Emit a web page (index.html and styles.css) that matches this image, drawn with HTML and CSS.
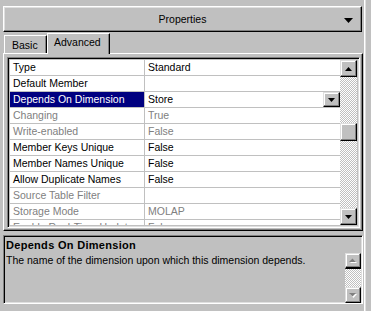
FILE: index.html
```html
<!DOCTYPE html>
<html>
<head>
<meta charset="utf-8">
<link rel="stylesheet" href="styles.css">
</head>
<body>
<div class="frame">
  <div class="main">
    <div class="props-btn">
      <span class="props-title">Properties</span>
      <svg class="props-arrow" width="9" height="5" viewBox="0 0 9 5"><path d="M0 0H9L4.5 5Z" fill="#000"/></svg>
    </div>
    <div class="tabs">
      <div class="tab">Basic</div>
      <div class="tab active">Advanced</div>
    </div>
    <div class="panel">
      <div class="grid">
        <div class="rows">
          <div class="row"><div class="name">Type</div><div class="val">Standard</div></div>
          <div class="row"><div class="name">Default Member</div><div class="val"></div></div>
          <div class="row"><div class="name sel">Depends On Dimension</div><div class="val combo"><span>Store</span><div class="combo-btn"><svg width="7" height="4" viewBox="0 0 7 4"><path d="M0 0H7L3.5 4Z" fill="#000"/></svg></div></div></div>
          <div class="row dis"><div class="name">Changing</div><div class="val">True</div></div>
          <div class="row dis"><div class="name">Write-enabled</div><div class="val">False</div></div>
          <div class="row"><div class="name">Member Keys Unique</div><div class="val">False</div></div>
          <div class="row"><div class="name">Member Names Unique</div><div class="val">False</div></div>
          <div class="row"><div class="name">Allow Duplicate Names</div><div class="val">False</div></div>
          <div class="row dis"><div class="name">Source Table Filter</div><div class="val"></div></div>
          <div class="row dis"><div class="name">Storage Mode</div><div class="val">MOLAP</div></div>
          <div class="row dis"><div class="name">Enable Real-Time Updates</div><div class="val">False</div></div>
        </div>
        <div class="vscroll">
          <div class="sbtn"><svg width="7" height="4" viewBox="0 0 7 4"><path d="M0 4H7L3.5 0Z" fill="#000"/></svg></div>
          <div class="track">
            <div class="track-a"></div>
            <div class="thumb"></div>
            <div class="track-b"></div>
          </div>
          <div class="sbtn"><svg width="7" height="4" viewBox="0 0 7 4"><path d="M0 0H7L3.5 4Z" fill="#000"/></svg></div>
        </div>
      </div>
    </div>
    <div class="desc">
      <div class="desc-title">Depends On Dimension</div>
      <div class="desc-body">
        <div class="desc-text">The name of the dimension upon which this dimension depends.</div>
        <div class="dscroll">
          <div class="sbtn dbtn up"><svg width="9" height="5" viewBox="0 0 9 5"><path d="M1 5H8L4.5 1.5Z" fill="#fff"/><path d="M0 4H7L3.5 0.5Z" fill="#808080"/></svg></div>
          <div class="dtrack"></div>
          <div class="sbtn dbtn"><svg width="9" height="5" viewBox="0 0 9 5"><path d="M1 1H8L4.5 5Z" fill="#fff"/><path d="M0 0H7L3.5 3.5Z" fill="#808080"/></svg></div>
        </div>
      </div>
    </div>
  </div>
  <div class="edge"></div>
</div>
</body>
</html>
```

FILE: styles.css
```css
html, body {
  margin: 0;
  padding: 0;
  background: #c0c0c0;
  width: 371px;
  height: 311px;
  overflow: hidden;
}
body {
  font-family: "Liberation Sans", Arial, sans-serif;
  font-size: 10.5px;
  color: #000;
}
.frame {
  display: flex;
  height: 311px;
}
.main {
  width: 360px;
  margin-left: 3px;
  padding-top: 6px;
}
.edge {
  width: 1px;
  margin-left: 1px;
  background: #fff;
  box-shadow: 1px 0 #dfdfdf;
}
.props-btn {
  box-sizing: border-box;
  width: 359px;
  height: 26px;
  border: 1px solid;
  border-color: #fff #000 #000 #fff;
  box-shadow: inset -1px -1px #808080, inset 1px 1px #dfdfdf;
  display: flex;
  align-items: center;
  justify-content: center;
  position: relative;
}
.props-title {
  font-size: 10.5px;
}
.props-arrow {
  position: absolute;
  right: 8px;
  top: 11px;
}
.tabs {
  display: flex;
  align-items: flex-end;
  height: 20px;
  margin-top: 1px;
  position: relative;
  z-index: 1;
}
.tab {
  box-sizing: border-box;
  height: 18px;
  border: 1px solid;
  border-color: #fff #000 transparent #fff;
  border-bottom: none;
  box-shadow: inset -1px 0 #808080;
  padding: 2px 8px 0 7px;
  line-height: 14px;
  margin-left: 1px;
  width: 43px;
}
.tab.active {
  height: 21px;
  margin-bottom: -1px;
  margin-left: 0;
  background: #c0c0c0;
  padding: 1px 7px 0 6px;
  width: 63px;
}
.panel {
  box-sizing: border-box;
  width: 360px;
  height: 178px;
  border: 1px solid;
  border-color: #fff #000 #000 #fff;
  box-shadow: inset -1px -1px #808080;
  padding: 3px 2px 2px 3px;
}
.grid {
  box-sizing: border-box;
  width: 353px;
  height: 171px;
  border: 1px solid;
  border-color: #808080 #fff #fff #808080;
  box-shadow: inset 1px 1px #000, inset -1px -1px #dfdfdf;
  padding: 2px;
  display: flex;
}
.rows {
  flex: 1;
  background: #fff;
  overflow: hidden;
  height: 165px;
}
.row {
  display: flex;
  height: 16px;
  box-sizing: border-box;
  border-bottom: 1px solid #c0c0c0;
}
.name {
  width: 131px;
  border-right: 1px solid #c0c0c0;
  padding-left: 3px;
  line-height: 15px;
  white-space: nowrap;
  overflow: hidden;
}
.name.sel {
  background: #000080;
  color: #fff;
}
.val {
  flex: 1;
  padding-left: 3px;
  line-height: 15px;
  white-space: nowrap;
  overflow: hidden;
}
.dis .name, .dis .val {
  color: #808080;
}
.combo {
  display: flex;
}
.combo span {
  flex: 1;
}
.combo-btn {
  box-sizing: border-box;
  width: 17px;
  height: 15px;
  border: 1px solid;
  border-color: #dfdfdf #000 #000 #dfdfdf;
  box-shadow: inset -1px -1px #808080, inset 1px 1px #fff;
  background: #c0c0c0;
  display: flex;
  align-items: center;
  justify-content: center;
}
.vscroll {
  width: 17px;
  display: flex;
  flex-direction: column;
}
.sbtn {
  box-sizing: border-box;
  width: 17px;
  height: 17px;
  border: 1px solid;
  border-color: #dfdfdf #000 #000 #dfdfdf;
  box-shadow: inset -1px -1px #808080, inset 1px 1px #fff;
  background: #c0c0c0;
  display: flex;
  align-items: center;
  justify-content: center;
  flex-shrink: 0;
}
.track {
  flex: 1;
  display: flex;
  flex-direction: column;
}
.track-a, .track-b, .dtrack {
  background: repeating-conic-gradient(#fff 0 25%, #c0c0c0 0 50%) 0 0 / 2px 2px;
}
.track-a {
  height: 46px;
}
.track-b {
  flex: 1;
}
.thumb {
  box-sizing: border-box;
  height: 18px;
  border: 1px solid;
  border-color: #dfdfdf #000 #000 #dfdfdf;
  box-shadow: inset -1px -1px #808080, inset 1px 1px #fff;
  background: #c0c0c0;
}
.desc {
  box-sizing: border-box;
  width: 360px;
  height: 69px;
  margin-top: 4px;
  border: 1px solid;
  border-color: #808080 #fff #fff #808080;
  box-shadow: inset 1px 1px #000, inset -1px -1px #dfdfdf;
  padding: 3px 1px 0 2px;
}
.desc-title {
  font-weight: bold;
  font-size: 11px;
  line-height: 13px;
  letter-spacing: 0.3px;
}
.desc-body {
  display: flex;
  height: 50px;
  margin-top: 1px;
}
.desc-text {
  flex: 1;
  line-height: 14px;
}
.dscroll {
  width: 16px;
  display: flex;
  flex-direction: column;
}
.dbtn {
  width: 16px;
  height: 16px;
}
.dbtn.up {
  border-bottom: 2px solid #000;
}
.dtrack {
  flex: 1;
}
```
